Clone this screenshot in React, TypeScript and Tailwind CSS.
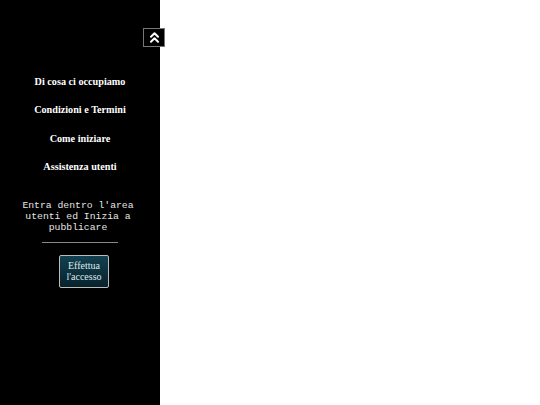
import { ChevronsUp } from 'lucide-react';

const links = ['Di cosa ci occupiamo', 'Condizioni e Termini', 'Come iniziare', 'Assistenza utenti'];

export default function App() {
  return (
    <div className="flex h-[405px] w-[540px] bg-white">
      {/* Sidebar */}
      <aside className="relative flex h-full w-[160px] flex-col items-center bg-black pt-[74px]">
        <button className="absolute left-[143px] top-[28px] flex h-[19px] w-[22px] items-center justify-center border border-[#777] bg-black text-white">
          <ChevronsUp size={17} strokeWidth={2.75} />
        </button>

        <nav className="flex w-full flex-col items-center gap-[12.3px] font-['Liberation_Serif',serif] text-[10.2px] font-bold leading-[16px] text-white">
          {links.map((l) => (
            <a key={l} href="#" className="block">
              {l}
            </a>
          ))}
        </nav>

        {/* call to action */}
        <p className="mr-[4px] mt-[25px] w-[130px] text-center font-['Liberation_Mono',monospace] text-[9.75px] leading-[11px] text-[#e5e5e5]">
          Entra dentro l'area utenti ed Inizia a pubblicare
        </p>

        <hr className="mt-[9px] w-[76px] border-t border-[#888]" />

        <button className="ml-[8px] mt-[12px] flex h-[33px] w-[50px] flex-col items-center justify-center rounded-[2px] border border-[#bbb] bg-gradient-to-b from-[#12404f] to-[#08222d] font-['Liberation_Serif',serif] text-[10px] leading-[11px] text-[#dfeaf0]">
          <span>Effettua</span>
          <span>l'accesso</span>
        </button>
      </aside>

      <main className="flex-1 bg-white" />
    </div>
  );
}
